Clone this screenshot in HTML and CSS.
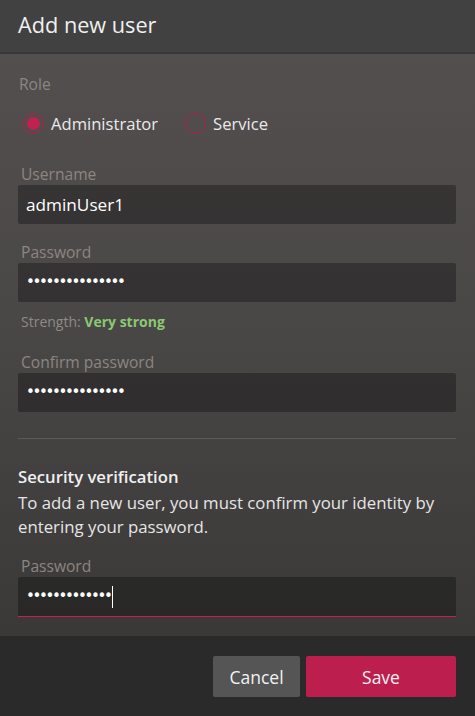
FILE: index.html
```html
<!DOCTYPE html>
<html lang="en">
<head>
<meta charset="utf-8">
<title>Add new user</title>
<link rel="stylesheet" href="styles.css">
</head>
<body>
<div class="dialog">
  <header class="dialog-header">
    <h1 class="dialog-title">Add new user</h1>
  </header>
  <main class="dialog-body">
    <div class="section-label">Role</div>
    <div class="radio-row">
      <label class="radio">
        <span class="radio-circle checked"><span class="radio-dot"></span></span>
        <span class="radio-text">Administrator</span>
      </label>
      <label class="radio">
        <span class="radio-circle"></span>
        <span class="radio-text">Service</span>
      </label>
    </div>

    <div class="field field-first">
      <div class="field-label">Username</div>
      <div class="input"><span class="input-text">adminUser1</span></div>
    </div>

    <div class="field">
      <div class="field-label">Password</div>
      <div class="input"><span class="dots">•••••••••••••••</span></div>
    </div>

    <div class="strength">Strength: <span class="strength-value">Very strong</span></div>

    <div class="field field-confirm">
      <div class="field-label">Confirm password</div>
      <div class="input"><span class="dots">•••••••••••••••</span></div>
    </div>

    <hr class="divider">

    <div class="verify-title">Security verification</div>
    <p class="verify-text">To add a new user, you must confirm your identity by entering your password.</p>

    <div class="field field-verify">
      <div class="field-label">Password</div>
      <div class="input input-focus"><span class="dots">•••••••••••••</span><span class="caret"></span></div>
    </div>
  </main>
  <footer class="dialog-footer">
    <button class="btn btn-cancel" type="button">Cancel</button>
    <button class="btn btn-save" type="button">Save</button>
  </footer>
</div>
</body>
</html>
```

FILE: styles.css
```css
* { box-sizing: border-box; }

html, body {
  margin: 0;
  padding: 0;
  height: 100%;
  background: #2a2a2a;
}

body {
  font-family: "Open Sans", "Noto Sans", sans-serif;
  color: #eaeaea;
}

.dialog {
  width: 475px;
  height: 716px;
  display: flex;
  flex-direction: column;
}

.dialog-header {
  height: 54px;
  background: #414141;
  border-bottom: 2px solid #383838;
  padding: 0 18px;
  display: flex;
  align-items: center;
}

.dialog-title {
  margin: 0;
  font-size: 21.7px;
  font-weight: 400;
  color: #f0f0f0;
  padding-bottom: 4px;
}

.dialog-body {
  height: 582px;
  padding: 18px 19px 0 18px;
  background: linear-gradient(to bottom, #534f4f 0%, #4a4747 45%, #3a3938 100%);
}

.section-label {
  height: 24px;
  line-height: 24px;
  font-size: 15.6px;
  color: #8d8580;
  padding-left: 1px;
}

.radio-row {
  margin-top: 15px;
  height: 24px;
  display: flex;
  align-items: center;
  padding-left: 5px;
  gap: 27px;
}

.radio {
  display: flex;
  align-items: center;
  gap: 7px;
}

.radio-circle {
  width: 21px;
  height: 21px;
  border-radius: 50%;
  border: 1.5px solid #b61d4a;
  display: flex;
  align-items: center;
  justify-content: center;
}

.radio-dot {
  width: 13px;
  height: 13px;
  border-radius: 50%;
  background: #c0214f;
}

.radio-text {
  font-size: 16.6px;
  color: #eaeaea;
}

.field { margin-top: 17px; }
.field.field-first { margin-top: 28px; }
.field.field-confirm { margin-top: 19px; }
.field.field-verify { margin-top: 16px; }

.field-label {
  height: 22px;
  line-height: 22px;
  font-size: 15.6px;
  color: #8d8580;
  padding-left: 3px;
}

.input {
  height: 39px;
  background: rgba(0, 0, 0, 0.3);
  border-radius: 2px;
  display: flex;
  align-items: center;
  padding-left: 8px;
}

.input-text {
  font-size: 17.2px;
  color: #ffffff;
}

.dots {
  font-family: "DejaVu Sans", sans-serif;
  font-size: 15px;
  letter-spacing: -2.35px;
  color: #ffffff;
  padding-bottom: 1px;
}

.input-focus {
  height: 40px;
  border-bottom: 1px solid #c0214f;
  border-radius: 2px 2px 0 0;
}

.caret {
  display: inline-block;
  width: 1px;
  height: 22px;
  background: #ffffff;
  margin-left: 2px;
}

.strength {
  margin-top: 10px;
  height: 20px;
  line-height: 20px;
  font-size: 14px;
  color: #8f8a87;
  padding-left: 3px;
}

.strength-value {
  color: #8cc872;
  font-weight: 700;
}

.divider {
  margin: 26px 0 0 0;
  border: 0;
  height: 1px;
  background: #5d5a59;
}

.verify-title {
  margin-top: 26px;
  height: 24px;
  line-height: 24px;
  font-size: 16.7px;
  font-weight: 600;
  color: #f0f0f0;
}

.verify-text {
  margin: 2px 0 0 0;
  font-size: 16.8px;
  line-height: 24px;
  color: #e6e6e6;
}

.dialog-footer {
  flex: 1;
  background: #2a2a2a;
  display: flex;
  justify-content: flex-end;
  align-items: flex-start;
  padding: 20px 19px 0 0;
  gap: 6px;
}

.btn {
  height: 41px;
  border: 0;
  border-radius: 2px;
  font-family: "Open Sans", "Noto Sans", sans-serif;
  font-size: 17.5px;
  color: #f2f2f2;
  padding: 0;
}

.btn-cancel {
  width: 87px;
  background: #555555;
}

.btn-save {
  width: 150px;
  background: #bc1f4d;
}
```
